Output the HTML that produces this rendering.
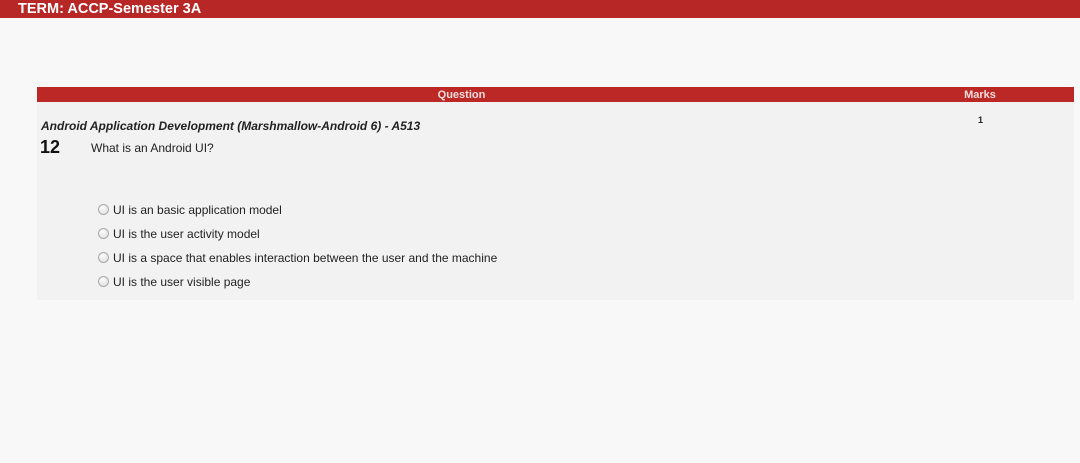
<!DOCTYPE html>
<html><head><style>
body{margin:0;width:1080px;height:463px;background:#f8f8f8;font-family:"Liberation Sans",Arial,sans-serif;position:relative;overflow:hidden}
.top{position:absolute;left:0;top:0;width:1080px;height:18px;background:#b72725;color:#fff;font-weight:bold;font-size:14.5px;line-height:18px;padding-left:18px;box-sizing:border-box}
.hdr{position:absolute;top:87px;height:15px;background:#bc2826;color:#f3dede;font-weight:bold;font-size:11px;line-height:16px;text-align:center}
.panel{position:absolute;left:37px;top:102px;width:1037px;height:198px;background:#f2f2f2}
.t{position:absolute;font-size:12px;color:#222;white-space:nowrap}
.r{position:absolute;width:11px;height:11px;border-radius:50%;border:1px solid #aaa;background:radial-gradient(circle at 40% 35%,#fff,#d8d8d8);box-sizing:border-box}
</style></head><body>
<div class="top">TERM: ACCP-Semester 3A</div>
<div class="panel"></div>
<div class="hdr" style="left:37px;width:849px">Question</div>
<div class="hdr" style="left:886px;width:188px">Marks</div>
<div class="t" style="left:978px;top:115px;font-size:9px;font-weight:bold">1</div>
<div class="t" style="left:41px;top:119px;font-size:12px;font-weight:bold;font-style:italic">Android Application Development (Marshmallow-Android 6) - A513</div>
<div class="t" style="left:40px;top:137px;font-size:18px;font-weight:bold;color:#111">12</div>
<div class="t" style="left:91px;top:141px">What is an Android UI?</div>
<div class="r" style="left:98px;top:204px"></div><div class="t" style="left:113px;top:203px">UI is an basic application model</div>
<div class="r" style="left:98px;top:228px"></div><div class="t" style="left:113px;top:227px">UI is the user activity model</div>
<div class="r" style="left:98px;top:252px"></div><div class="t" style="left:113px;top:251px">UI is a space that enables interaction between the user and the machine</div>
<div class="r" style="left:98px;top:276px"></div><div class="t" style="left:113px;top:275px">UI is the user visible page</div>
</body></html>
